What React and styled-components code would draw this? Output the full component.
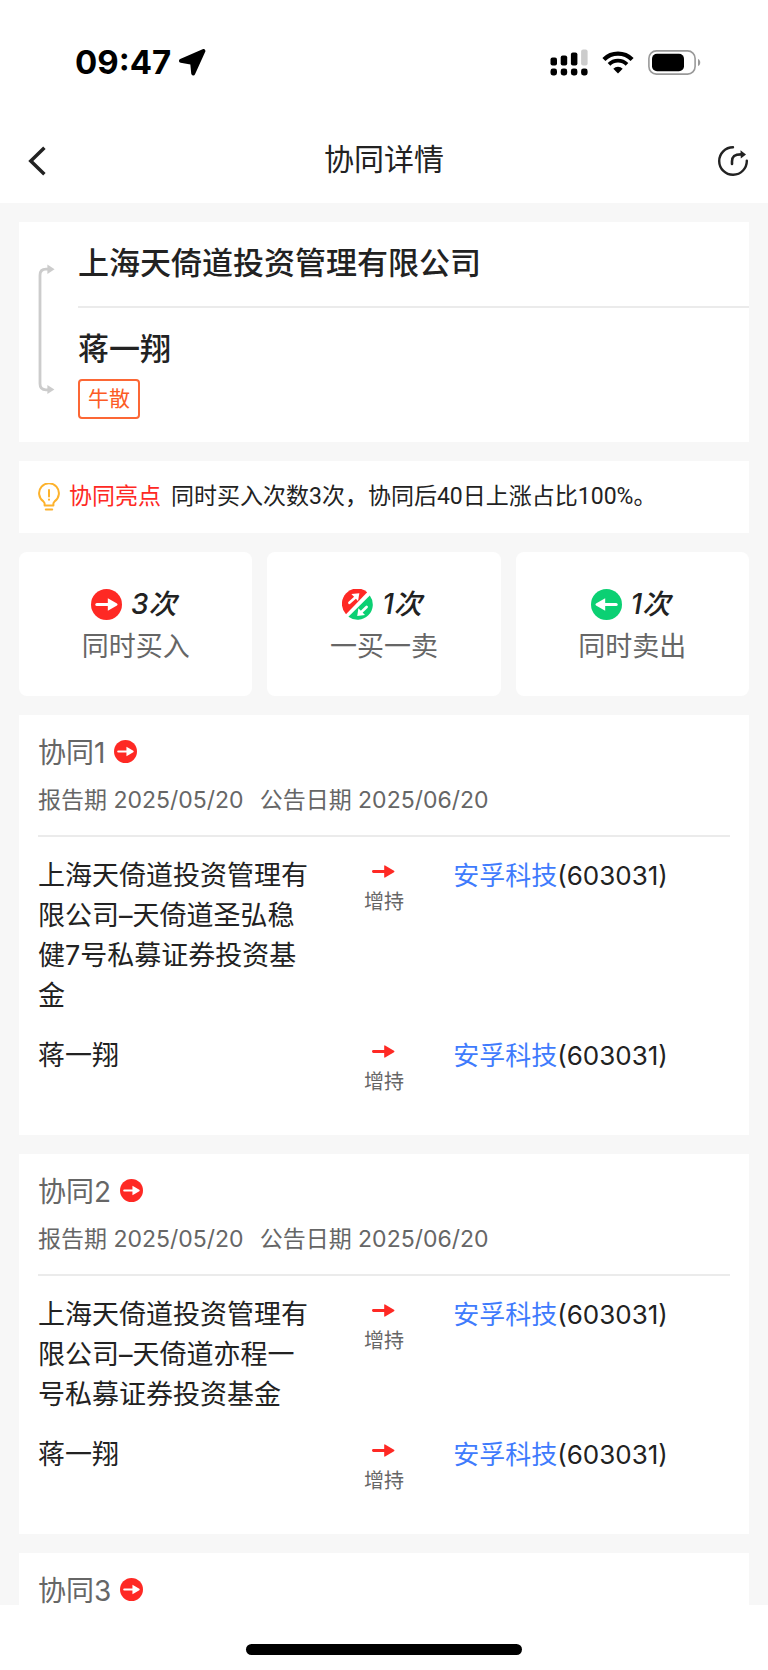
import React from 'react';
import styled, { createGlobalStyle } from 'styled-components';

const GlobalStyle = createGlobalStyle`
  * {
    box-sizing: border-box;
  }

  body {
    margin: 0;
    background: #fff;
    color: #222;
    font-family: Inter, "Noto Sans CJK SC", sans-serif;
  }
`;

const records = [
  {
    id: 1,
    reported: '2025/05/20',
    announced: '2025/06/20',
    trades: [
      { holder: '上海天倚道投资管理有限公司–天倚道圣弘稳健7号私募证券投资基金', action: '增持', stock: '安孚科技', code: '603031' },
      { holder: '蒋一翔', action: '增持', stock: '安孚科技', code: '603031' },
    ],
  },
  {
    id: 2,
    reported: '2025/05/20',
    announced: '2025/06/20',
    trades: [
      { holder: '上海天倚道投资管理有限公司–天倚道亦程一号私募证券投资基金', action: '增持', stock: '安孚科技', code: '603031' },
      { holder: '蒋一翔', action: '增持', stock: '安孚科技', code: '603031' },
    ],
  },
  { id: 3 },
];

const LocationIcon = () => (
  <svg width="27" height="27" viewBox="0 0 27 27" aria-hidden="true">
    <path d="M2 11.8 L24.4 2 L14.2 24.4 L13.2 13.8 Z" fill="#000" stroke="#000" strokeWidth="4" strokeLinejoin="round" />
  </svg>
);

const SignalIcon = () => (
  <svg width="38" height="27" viewBox="0 0 38 27" aria-hidden="true">
    <rect x="0.5" y="8.5" width="6.5" height="8" rx="2" />
    <rect x="10.7" y="6.5" width="6.5" height="10" rx="2" />
    <rect x="20.9" y="3.5" width="6.5" height="13" rx="2" />
    <rect x="31.1" y="0.5" width="6.5" height="16" rx="2" fill="#ccc" />
    <rect x="0.5" y="19.5" width="6.5" height="7" rx="2.4" />
    <rect x="10.7" y="19.5" width="6.5" height="7" rx="2.4" />
    <rect x="20.9" y="19.5" width="6.5" height="7" rx="2.4" />
    <rect x="31.1" y="19.5" width="6.5" height="7" rx="2.4" />
  </svg>
);

const WifiIcon = () => (
  <svg width="32" height="24" viewBox="0 0 32 24" aria-hidden="true">
    <path d="M1.9 9.4 A20 20 0 0 1 30.1 9.4" fill="none" stroke="#000" strokeWidth="4.3" />
    <path d="M7 14.4 A12.8 12.8 0 0 1 25 14.4" fill="none" stroke="#000" strokeWidth="3.8" />
    <path d="M16 23.5 L11.3 18.8 A6.7 6.7 0 0 1 20.7 18.8 Z" />
  </svg>
);

const BatteryIcon = () => (
  <svg width="53" height="25" viewBox="0 0 53 25" aria-hidden="true">
    <rect x="0.9" y="0.9" width="46.2" height="23.2" rx="7.5" fill="none" stroke="#999" strokeWidth="1.6" />
    <rect x="4" y="3.7" width="32" height="17.6" rx="5" />
    <path d="M50 9 C53 10 53 15 50 16 Z" fill="#999" />
  </svg>
);

const BackIcon = () => (
  <svg width="18" height="30" viewBox="0 0 18 30" aria-hidden="true">
    <path d="M16.4 1.8 L2.8 15 L16.4 28.2" fill="none" stroke="#222" strokeWidth="3.5" />
  </svg>
);

const ShareIcon = () => (
  <svg width="30" height="30" viewBox="0 0 30 30" aria-hidden="true">
    <path d="M15 1.2 A13.8 13.8 0 1 0 28.8 14.6" fill="none" stroke="#222" strokeWidth="2.4" strokeLinecap="round" />
    <path d="M14 18 V15.5 C14 10.5 16.5 8.4 23 8.4" fill="none" stroke="#222" strokeWidth="2.6" strokeLinecap="round" />
    <path d="M22.5 4.2 L28 8.4 L22.8 12.6 Z" fill="#222" />
  </svg>
);

const BracketIcon = () => (
  <svg width="17" height="130" viewBox="0 0 17 130" aria-hidden="true">
    <path d="M10 5.2 H8 Q2 5.2 2 11.2 V119.8 Q2 125.8 8 125.8 H10" fill="none" stroke="#ccc" strokeWidth="2.8" />
    <path d="M9.4 0.4 L16.6 5.2 L9.4 10 Z" fill="#ccc" />
    <path d="M9.4 121 L16.4 125.6 L9.4 130 Z" fill="#ccc" />
  </svg>
);

const BulbIcon = () => (
  <svg width="22" height="28" viewBox="0 0 22 28" fill="none" stroke="#fdb22c" strokeWidth="2" strokeLinecap="round" aria-hidden="true">
    <path d="M6.6 22.6 V20.6 Q6.6 19.4 5.4 18.4 A9.9 9.9 0 1 1 16.6 18.4 Q15.4 19.4 15.4 20.6 V22.6 Z" strokeLinejoin="round" />
    <path d="M11 7 V13.4" />
    <path d="M11 16.6 V16.8" />
    <path d="M7.8 26.6 H14.2" />
  </svg>
);

const BuyIcon = ({ size }) => (
  <svg width={size} height={size} viewBox="0 0 31 31" aria-hidden="true">
    <circle cx="15.5" cy="15.5" r="15.5" fill="#fe2924" />
    <path d="M5.8 15.5 H18" stroke="#fff" strokeWidth="3" strokeLinecap="round" />
    <path d="M16.8 9.2 L26 14.6 Q27.2 15.5 26 16.4 L16.8 21.8 Z" fill="#fff" />
  </svg>
);

const SellIcon = ({ size }) => (
  <svg width={size} height={size} viewBox="0 0 31 31" aria-hidden="true">
    <circle cx="15.5" cy="15.5" r="15.5" fill="#0bd073" />
    <path d="M25.2 15.5 H13" stroke="#fff" strokeWidth="3" strokeLinecap="round" />
    <path d="M14.2 9.2 L5 14.6 Q3.8 15.5 5 16.4 L14.2 21.8 Z" fill="#fff" />
  </svg>
);

const MixedIcon = ({ size }) => (
  <svg width={size} height={size} viewBox="0 0 31 31" aria-hidden="true">
    <path d="M25.2 3.2 A15.3 15.3 0 0 0 4 25.2 Z" fill="#fe2924" />
    <path d="M27.8 6.4 A15.3 15.3 0 0 1 6.4 27.8 Z" fill="#0bd073" />
    <path d="M7.4 13.8 L13 8.8" stroke="#fff" strokeWidth="2.6" strokeLinecap="round" />
    <path d="M9.4 5 L17.4 4.2 L16 12 Z" fill="#fff" />
    <path d="M24.6 18 L19.4 23" stroke="#fff" strokeWidth="2.6" strokeLinecap="round" />
    <path d="M16.4 19.2 L15.2 27 L23 26 Z" fill="#fff" />
  </svg>
);

const ArrowIcon = () => (
  <svg width="23" height="13" viewBox="0 0 23 13" aria-hidden="true">
    <path d="M1.4 6.5 H14" stroke="#fe2924" strokeWidth="2.8" strokeLinecap="round" />
    <path d="M12.2 0.9 Q12.2 0 13.1 0.4 L22 5.7 Q23 6.5 22 7.3 L13.1 12.6 Q12.2 13 12.2 12.1 Z" fill="#fe2924" />
  </svg>
);

const Page = styled.div`
  display: flex;
  flex-direction: column;
  height: 100vh;
`;

const StatusBar = styled.div`
  display: flex;
  flex-shrink: 0;
  align-items: center;
  justify-content: space-between;
  padding: 45px 67px 38px 75px;
`;

const StatusGroup = styled.div`
  display: flex;
  align-items: center;
  gap: ${(props) => props.$gap}px;
`;

const Time = styled.span`
  color: #000;
  font-size: 33px;
  font-weight: 700;
  line-height: 34px;
`;

const NavBar = styled.header`
  display: grid;
  flex-shrink: 0;
  grid-template-columns: 1fr auto 1fr;
  align-items: center;
  padding: 20px 20px 22px 28px;
`;

const NavTitle = styled.h1`
  grid-column: 2;
  margin: 0 8px 0 0;
  font-size: 30px;
  font-weight: 400;
  line-height: 44px;
`;

const IconButton = styled.button`
  display: flex;
  justify-self: ${(props) => props.$side};
  padding: 4px 0 0;
  border: 0;
  background: none;
  cursor: pointer;
`;

const Content = styled.main`
  display: grid;
  flex: 1;
  align-content: start;
  gap: 19px;
  min-height: 0;
  padding: 19px 19px 0;
  overflow-y: auto;
  scrollbar-width: none;
  background: #f7f7f7;
`;

const Parties = styled.section`
  display: flex;
  background: #fff;
`;

const PartyLink = styled.div`
  flex: 0 0 59px;
  padding: 42px 0 0 19px;
`;

const PartyList = styled.div`
  flex: 1;
`;

const Party = styled.div`
  padding: 21px 0 23px;

  & + & {
    border-top: 2px solid #ebebeb;
  }
`;

const PartyName = styled.h2`
  margin: 0;
  font-size: 31px;
  font-weight: 500;
  line-height: 40px;
`;

const Tag = styled.span`
  display: inline-block;
  margin-top: 10px;
  padding: 0 8px;
  border: 2px solid #fc6735;
  border-radius: 4px;
  color: #fc5b25;
  font-size: 21px;
  line-height: 36px;
  vertical-align: top;
`;

const Highlight = styled.section`
  display: flex;
  align-items: center;
  padding: 16px 19px;
  background: #fff;
  font-family: Roboto, "Noto Sans CJK SC", sans-serif;
  font-size: 23px;
  line-height: 40px;
`;

const HighlightLabel = styled.strong`
  margin: 0 10px 0 9px;
  color: #fe2924;
  font-weight: 400;
`;

const Stats = styled.section`
  display: grid;
  grid-template-columns: repeat(3, 1fr);
  gap: 15px;
`;

const Stat = styled.div`
  display: flex;
  flex-direction: column;
  align-items: center;
  padding: 30px 0 28px;
  border-radius: 8px;
  background: #fff;
`;

const StatValue = styled.div`
  display: flex;
  align-items: center;
  gap: 9px;
  padding-right: 4px;
  font-size: 28px;
  font-style: italic;
  font-weight: 500;
  line-height: 44px;
`;

const StatLabel = styled.div`
  color: #666;
  font-size: 27px;
  line-height: 42px;
`;

const Record = styled.article`
  padding: 24px 19px 37px;
  background: #fff;

  &:last-child {
    padding-bottom: 0;
  }
`;

const RecordHead = styled.header`
  padding-bottom: 16px;
  border-bottom: 2px solid #ebebeb;
  color: #666;
`;

const RecordTitle = styled.h3`
  display: flex;
  align-items: center;
  gap: 9px;
  margin: 0;
  color: #666;
  font-size: 28px;
  font-weight: 400;
  line-height: 28px;

  svg {
    margin-bottom: 4px;
  }
`;

const Dates = styled.div`
  display: flex;
  gap: 16px;
  margin-top: 14px;
  font-size: 23px;
  line-height: 38px;
`;

const Trades = styled.div`
  display: grid;
  gap: 20px;
  padding-top: 19px;
`;

const Trade = styled.div`
  display: grid;
  grid-template-columns: 2fr 1fr 2fr;
  font-size: 27px;
  line-height: 40px;
`;

const Action = styled.div`
  display: flex;
  flex-direction: column;
  align-items: center;
  padding: 9px 0 1px;
  color: #666;
  font-size: 20px;
  line-height: 30px;

  svg {
    margin-bottom: 9px;
  }
`;

const Stock = styled.div`
  font-size: 26px;
`;

const StockLink = styled.a`
  color: #3f7bfd;
  text-decoration: none;
`;

const HomeBar = styled.footer`
  display: flex;
  flex-shrink: 0;
  justify-content: center;
  padding: 39px 0 15px;

  &::after {
    width: 36%;
    height: 11px;
    border-radius: 6px;
    background: #000;
    content: "";
  }
`;

const App = () => {
  return (
    <Page>
      <GlobalStyle />
      <StatusBar>
        <StatusGroup $gap={8}>
          <Time>09:47</Time>
          <LocationIcon />
        </StatusGroup>
        <StatusGroup $gap={14}>
          <SignalIcon />
          <WifiIcon />
          <BatteryIcon />
        </StatusGroup>
      </StatusBar>
      <NavBar>
        <IconButton $side="start" aria-label="返回"><BackIcon /></IconButton>
        <NavTitle>协同详情</NavTitle>
        <IconButton $side="end" aria-label="分享"><ShareIcon /></IconButton>
      </NavBar>
      <Content>
        <Parties>
          <PartyLink><BracketIcon /></PartyLink>
          <PartyList>
            <Party>
              <PartyName>上海天倚道投资管理有限公司</PartyName>
            </Party>
            <Party>
              <PartyName>蒋一翔</PartyName>
              <Tag>牛散</Tag>
            </Party>
          </PartyList>
        </Parties>
        <Highlight>
          <BulbIcon />
          <HighlightLabel>协同亮点</HighlightLabel>
          <span>同时买入次数3次，协同后40日上涨占比100%。</span>
        </Highlight>
        <Stats>
          <Stat>
            <StatValue><BuyIcon size={31} />3次</StatValue>
            <StatLabel>同时买入</StatLabel>
          </Stat>
          <Stat>
            <StatValue><MixedIcon size={31} />1次</StatValue>
            <StatLabel>一买一卖</StatLabel>
          </Stat>
          <Stat>
            <StatValue><SellIcon size={31} />1次</StatValue>
            <StatLabel>同时卖出</StatLabel>
          </Stat>
        </Stats>
        {records.map((record) => (
          <Record key={record.id}>
            {record.trades ? (
              <>
                <RecordHead>
                  <RecordTitle>协同{record.id}<BuyIcon size={23} /></RecordTitle>
                  <Dates>
                    <span>报告期 {record.reported}</span>
                    <span>公告日期 {record.announced}</span>
                  </Dates>
                </RecordHead>
                <Trades>
                  {record.trades.map((trade) => (
                    <Trade key={trade.holder}>
                      <div>{trade.holder}</div>
                      <Action>
                        <ArrowIcon />
                        {trade.action}
                      </Action>
                      <Stock>
                        <StockLink href="#">{trade.stock}</StockLink>({trade.code})
                      </Stock>
                    </Trade>
                  ))}
                </Trades>
              </>
            ) : (
              <RecordTitle>协同{record.id}<BuyIcon size={23} /></RecordTitle>
            )}
          </Record>
        ))}
      </Content>
      <HomeBar />
    </Page>
  );
};

export default App;
